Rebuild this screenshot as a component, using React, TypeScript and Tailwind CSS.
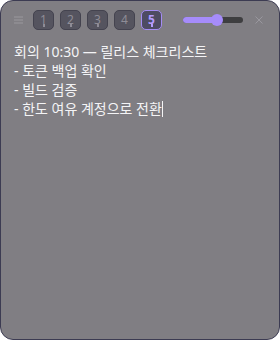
import React from 'react';

const tabs = [
  { n: 1, filled: true },
  { n: 2, filled: true },
  { n: 3, filled: true },
  { n: 4, filled: false },
  { n: 5, filled: true },
];

const lines = ['회의 10:30 — 릴리스 체크리스트', '- 토큰 백업 확인', '- 빌드 검증', '- 한도 여유 계정으로 전환'];

export default function App() {
  const active = 5;
  return (
    <div className="w-[280px] h-[340px] bg-white" style={{ fontFamily: '"Noto Sans", "Noto Sans CJK KR", sans-serif' }}>
      <div className="w-full h-full rounded-[13px] border border-[#3c3b52] bg-[#807e83] flex flex-col overflow-hidden">
        {/* toolbar */}
        <div className="flex items-center h-[38px] pl-[13px] pr-[13px]">
          <svg width="9" height="8" viewBox="0 0 9 8" className="mr-[10px]">
            <rect x="0" y="0.5" width="9" height="1" fill="#99979e" />
            <rect x="0" y="3.5" width="9" height="1" fill="#99979e" />
            <rect x="0" y="6.5" width="9" height="1" fill="#99979e" />
          </svg>
          <div className="flex items-center gap-[6px]">
            {tabs.map((t) => {
              const on = t.n === active;
              return (
                <div
                  key={t.n}
                  className={
                    on
                      ? 'relative w-[21px] h-[20px] rounded-[5px] border border-[#a58cf5] bg-[#4e4b63] flex items-center justify-center text-[12px] text-[#b49cff] font-bold'
                      : 'relative w-[21px] h-[20px] rounded-[5px] border border-[#44434f] bg-[#55545f] flex items-center justify-center text-[12px] text-[#8e8c96]'
                  }
                >
                  <span className="leading-none -mt-[1px]">{t.n}</span>
                  {t.filled && (
                    <span className={on ? 'absolute left-1/2 -translate-x-1/2 bottom-[2px] w-[2px] h-[3px] bg-[#b49cff]' : 'absolute left-1/2 -translate-x-1/2 bottom-[2px] w-[2px] h-[3px] bg-[#8e8c96]'} />
                  )}
                </div>
              );
            })}
          </div>
          {/* slider */}
          <div className="relative ml-[21px] w-[60px] h-[6px] rounded-full bg-[#3e3e40]">
            <div className="absolute left-0 top-0 h-full w-[34px] rounded-full bg-[#a68cfb]" />
            <div className="absolute left-[28px] top-1/2 -translate-y-1/2 w-[12px] h-[12px] rounded-full bg-[#a68cfb]" />
          </div>
          <svg width="8" height="8" viewBox="0 0 8 8" className="ml-auto mr-[3px]">
            <path d="M0.5 0.5 L7.5 7.5 M7.5 0.5 L0.5 7.5" stroke="#99979e" strokeWidth="1" />
          </svg>
        </div>
        {/* note body */}
        <div className="px-[13px] pt-[3px] text-[14px] leading-[19px] text-[#f4f4f6]">
          {lines.map((l, i) => (
            <div key={i} className="whitespace-pre">
              {l}
              {i === lines.length - 1 && <span className="inline-block w-[1px] h-[16px] bg-[#f4f4f6] align-[-3px]" />}
            </div>
          ))}
        </div>
      </div>
    </div>
  );
}
